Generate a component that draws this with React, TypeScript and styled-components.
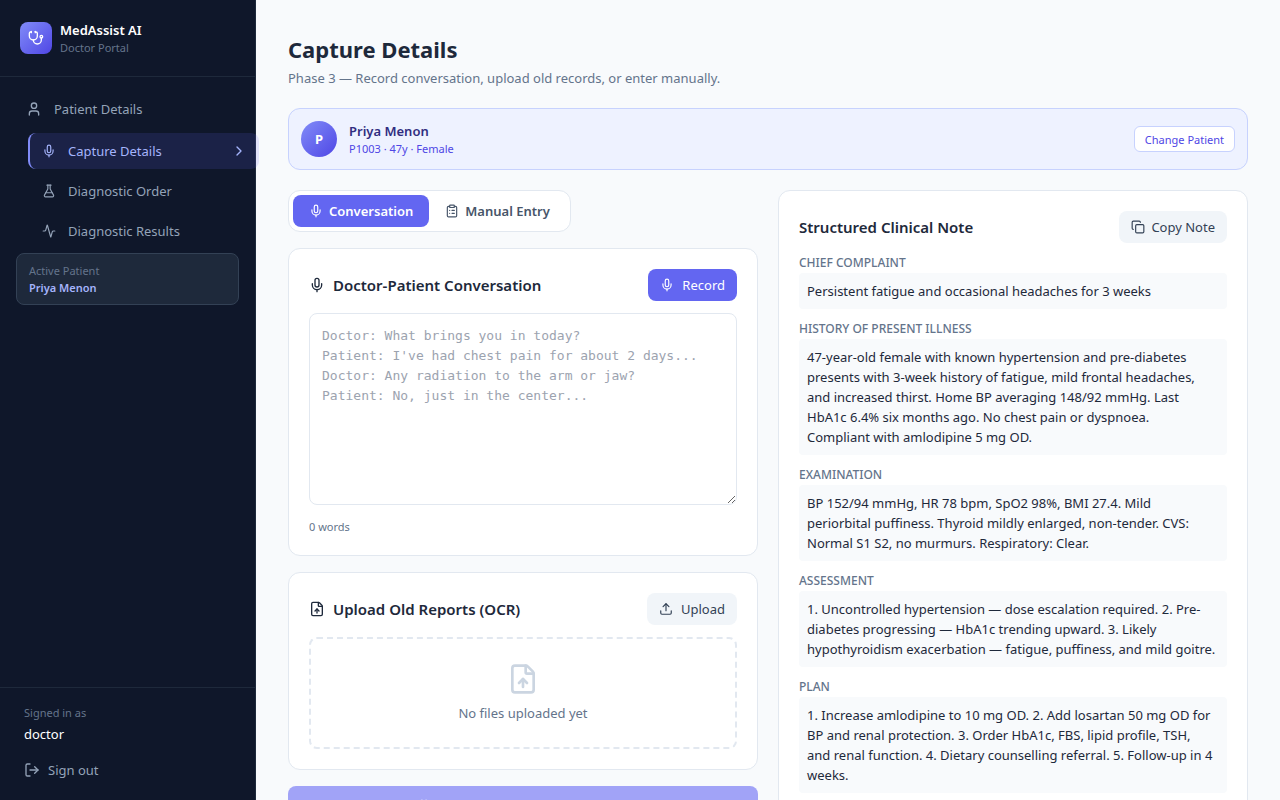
import React from 'react';
import styled, { createGlobalStyle, css } from 'styled-components';
import {
  Activity, Brain, ChevronRight, ClipboardList, Copy, FileUp, FlaskConical, LogOut, Mic, Stethoscope, Upload, User,
} from 'lucide-react';

const Global = createGlobalStyle`
  *, *::before, *::after { box-sizing: border-box; }
  body { margin: 0; background: #f8fafc; }
  body, button, textarea { font-family: "Segoe UI", "Noto Sans", "Open Sans", sans-serif; }
  h1, h2, h3, p, ul, dl, dd { margin: 0; padding: 0; }
  button { cursor: pointer; border: 0; }
`;

const Shell = styled.div`
  display: flex;
  height: 100vh;
  overflow: hidden;
  color: #1e293b;
  font-size: 13px;
  line-height: 20px;
`;

const Sidebar = styled.aside`
  position: relative;
  z-index: 1;
  display: flex;
  flex-direction: column;
  flex: 0 0 256px;
  background: #0f172a;
  border-right: 1px solid #1e293b;
`;

const Brand = styled.div`
  display: flex;
  align-items: center;
  gap: 8px;
  height: 77px;
  padding: 0 20px;
  border-bottom: 1px solid #1e293b;
`;

const Logo = styled.span`
  display: grid;
  place-items: center;
  width: 32px;
  height: 32px;
  border-radius: 8px;
  color: #fff;
  background: linear-gradient(135deg, #818cf8, #4f46e5);
`;

const BrandName = styled.p`
  color: #fff;
  font-weight: 600;
  line-height: 20px;
`;

const Small = styled.p<{ $color?: string }>`
  color: ${(p) => p.$color ?? '#64748b'};
  font-size: 11px;
  line-height: 16px;
`;

const Nav = styled.nav`
  padding: 14px 16px 0;
`;

const NavList = styled.ul<{ $nested?: boolean }>`
  display: flex;
  flex-direction: column;
  gap: 4px;
  list-style: none;
  ${(p) => p.$nested && css`margin: 6px -20px 0 12px;`}
`;

const NavLink = styled.a<{ $active?: boolean }>`
  display: flex;
  align-items: center;
  gap: 12px;
  height: 36px;
  padding: 0 12px 0 10px;
  border-radius: 8px;
  border-left: 0 solid #818cf8;
  color: #94a3b8;
  text-decoration: none;
  font-size: 13px;

  ${NavList} ${NavList} & {
    padding-left: 12px;
    border-left: 2px solid ${(p) => (p.$active ? '#818cf8' : 'transparent')};
  }
  ${(p) => p.$active && css`
    color: #a5b4fc;
    background: rgba(99, 102, 241, 0.15);
  `}
`;

const NavText = styled.span`
  flex: 1;
`;

const ActiveCard = styled.section`
  margin: 4px 16px 0;
  padding: 9px 12px 7px;
  border: 1px solid #334155;
  border-radius: 8px;
  background: #1e293b;
`;

const ActiveName = styled.p`
  color: #a5b4fc;
  font-size: 11px;
  font-weight: 600;
  line-height: 18px;
`;

const Account = styled.div`
  margin-top: auto;
  padding: 17px 24px 20px;
  border-top: 1px solid #1e293b;
`;

const UserName = styled.p`
  margin-top: 3px;
  color: #fff;
`;

const SignOut = styled.button`
  display: flex;
  align-items: center;
  gap: 8px;
  margin-top: 16px;
  padding: 0;
  color: #94a3b8;
  background: none;
  font-size: 13px;
  line-height: 20px;
`;

const Main = styled.main`
  flex: 1;
  min-width: 0;
  padding: 32px;
  overflow-y: auto;
  scrollbar-width: none;
`;

const Title = styled.h1`
  font-size: 22px;
  font-weight: 700;
  line-height: 34px;
`;

const Subtitle = styled.p`
  margin-top: 2px;
  color: #64748b;
`;

const Banner = styled.section`
  display: flex;
  align-items: center;
  gap: 12px;
  margin: 20px 0;
  padding: 12px;
  border: 1px solid #c7d2fe;
  border-radius: 12px;
  background: #eef2ff;
`;

const Avatar = styled.span`
  display: grid;
  place-items: center;
  width: 36px;
  height: 36px;
  border-radius: 50%;
  color: #fff;
  background: linear-gradient(135deg, #818cf8, #4f46e5);
  font-size: 13px;
  font-weight: 700;
`;

const BannerText = styled.div`
  flex: 1;
`;

const PatientName = styled.p`
  color: #312e81;
  font-weight: 600;
`;

const ChangeButton = styled.button`
  height: 26px;
  padding: 0 10px;
  border: 1px solid #c7d2fe;
  border-radius: 6px;
  color: #4f46e5;
  background: #fff;
  font-size: 11px;
`;

const Columns = styled.div`
  display: grid;
  grid-template-columns: 1fr 1fr;
  align-items: start;
  gap: 20px;
`;

const Stack = styled.div`
  display: flex;
  flex-direction: column;
  gap: 16px;
`;

const Tabs = styled.div`
  display: flex;
  align-self: flex-start;
  padding: 4px;
  border: 1px solid #e2e8f0;
  border-radius: 12px;
  background: #fff;
`;

const Tab = styled.button<{ $active?: boolean }>`
  display: flex;
  align-items: center;
  gap: 6px;
  height: 32px;
  padding: 0 16px;
  border-radius: 8px;
  color: ${(p) => (p.$active ? '#fff' : '#475569')};
  background: ${(p) => (p.$active ? '#6366f1' : 'transparent')};
  font-size: 13px;
  font-weight: 600;
`;

const Card = styled.section`
  padding: 20px;
  border: 1px solid #e2e8f0;
  border-radius: 12px;
  background: #fff;
`;

const CardHead = styled.div`
  display: flex;
  align-items: center;
  justify-content: space-between;
  margin-bottom: 12px;
`;

const CardTitle = styled.h2`
  display: flex;
  align-items: center;
  gap: 8px;
  font-size: 15px;
  font-weight: 600;
  line-height: 24px;
`;

const ActionButton = styled.button<{ $primary?: boolean; $gap?: number }>`
  display: flex;
  align-items: center;
  gap: ${(p) => p.$gap ?? 8}px;
  height: 32px;
  padding: 0 12px;
  border-radius: 8px;
  color: ${(p) => (p.$primary ? '#fff' : '#334155')};
  background: ${(p) => (p.$primary ? '#6366f1' : '#f1f5f9')};
  font-size: 13px;
`;

const Transcript = styled.textarea`
  display: block;
  width: 100%;
  height: 192px;
  padding: 12px;
  border: 1px solid #e2e8f0;
  border-radius: 8px;
  resize: vertical;
  background: #fff;
  color: #1e293b;
  font-family: Consolas, "DejaVu Sans Mono", monospace;
  font-size: 13px;
  line-height: 20px;

  &::placeholder { color: #9ca3af; }
`;

const WordCount = styled(Small)`
  margin-top: 14px;
`;

const DropZone = styled.div`
  display: flex;
  flex-direction: column;
  align-items: center;
  gap: 8px;
  padding: 24px;
  border: 2px dashed #e2e8f0;
  border-radius: 8px;
  color: #64748b;

  svg { color: #cbd5e1; }
`;

const Generate = styled.button`
  display: flex;
  align-items: center;
  justify-content: center;
  gap: 8px;
  height: 42px;
  border-radius: 8px;
  color: #fff;
  background: #a1a3f7;
  font-size: 13px;
  font-weight: 600;
`;

const Notes = styled.dl`
  display: flex;
  flex-direction: column;
  gap: 12px;
`;

const NoteLabel = styled.dt`
  margin-bottom: 2px;
  color: #64748b;
  font-size: 12px;
  font-weight: 500;
  line-height: 16px;
  text-transform: uppercase;
`;

const NoteBody = styled.dd`
  padding: 8px;
  border-radius: 4px;
  background: #f8fafc;
`;

const notes = [
  ['Chief Complaint', 'Persistent fatigue and occasional headaches for 3 weeks'],
  ['History of Present Illness', '47-year-old female with known hypertension and pre-diabetes presents with 3-week history of fatigue, mild frontal headaches, and increased thirst. Home BP averaging 148/92 mmHg. Last HbA1c 6.4% six months ago. No chest pain or dyspnoea. Compliant\u00a0with\u00a0amlodipine 5 mg OD.'],
  ['Examination', 'BP 152/94 mmHg, HR 78 bpm, SpO2 98%, BMI 27.4. Mild periorbital\u00a0puffiness. Thyroid mildly enlarged, non-tender. CVS: Normal S1 S2, no murmurs. Respiratory: Clear.'],
  ['Assessment', '1. Uncontrolled hypertension — dose escalation required. 2. Pre-diabetes progressing — HbA1c trending upward. 3. Likely hypothyroidism exacerbation — fatigue, puffiness, and mild goitre.'],
  ['Plan', '1. Increase amlodipine to 10 mg OD. 2. Add losartan 50 mg OD for BP and renal protection. 3. Order HbA1c, FBS, lipid profile, TSH, and\u00a0renal function. 4. Dietary counselling referral. 5. Follow-up in 4 weeks.'],
];

const placeholder = `Doctor: What brings you in today?
Patient: I've had chest pain for about 2 days...
Doctor: Any radiation to the arm or jaw?
Patient: No, just in the center...`;

export default function App() {
  return (
    <Shell>
      <Global />
      <Sidebar>
        <Brand>
          <Logo><Stethoscope size={16} /></Logo>
          <div>
            <BrandName>MedAssist AI</BrandName>
            <Small>Doctor Portal</Small>
          </div>
        </Brand>
        <Nav aria-label="Main">
          <NavList>
            <li>
              <NavLink href="#patient"><User size={16} /><NavText>Patient Details</NavText></NavLink>
              <NavList $nested>
                <li>
                  <NavLink href="#capture" $active aria-current="page">
                    <Mic size={14} /><NavText>Capture Details</NavText><ChevronRight size={16} />
                  </NavLink>
                </li>
                <li><NavLink href="#order"><FlaskConical size={14} /><NavText>Diagnostic Order</NavText></NavLink></li>
                <li><NavLink href="#results"><Activity size={14} /><NavText>Diagnostic Results</NavText></NavLink></li>
              </NavList>
            </li>
          </NavList>
        </Nav>
        <ActiveCard>
          <Small>Active Patient</Small>
          <ActiveName>Priya Menon</ActiveName>
        </ActiveCard>
        <Account>
          <Small>Signed in as</Small>
          <UserName>doctor</UserName>
          <SignOut type="button"><LogOut size={16} />Sign out</SignOut>
        </Account>
      </Sidebar>
      <Main>
        <Title>Capture Details</Title>
        <Subtitle>Phase 3 — Record conversation, upload old records, or enter manually.</Subtitle>
        <Banner>
          <Avatar>P</Avatar>
          <BannerText>
            <PatientName>Priya Menon</PatientName>
            <Small $color="#4f46e5">P1003 · 47y · Female</Small>
          </BannerText>
          <ChangeButton type="button">Change Patient</ChangeButton>
        </Banner>
        <Columns>
          <Stack>
            <Tabs role="tablist">
              <Tab type="button" role="tab" aria-selected $active><Mic size={14} />Conversation</Tab>
              <Tab type="button" role="tab" aria-selected={false}><ClipboardList size={14} />Manual Entry</Tab>
            </Tabs>
            <Card>
              <CardHead>
                <CardTitle id="conversation"><Mic size={16} />Doctor-Patient Conversation</CardTitle>
                <ActionButton type="button" $primary><Mic size={14} />Record</ActionButton>
              </CardHead>
              <Transcript aria-labelledby="conversation" placeholder={placeholder} />
              <WordCount>0 words</WordCount>
            </Card>
            <Card>
              <CardHead>
                <CardTitle><FileUp size={16} />Upload Old Reports (OCR)</CardTitle>
                <ActionButton type="button"><Upload size={14} />Upload</ActionButton>
              </CardHead>
              <DropZone>
                <FileUp size={32} />
                <p>No files uploaded yet</p>
              </DropZone>
            </Card>
            <Generate type="button" disabled><Brain size={16} />Generate Clinical Note with AI</Generate>
          </Stack>
          <Card>
            <CardHead>
              <CardTitle>Structured Clinical Note</CardTitle>
              <ActionButton type="button" $gap={6}><Copy size={14} />Copy Note</ActionButton>
            </CardHead>
            <Notes>
              {notes.map(([label, text]) => (
                <div key={label}>
                  <NoteLabel>{label}</NoteLabel>
                  <NoteBody>{text}</NoteBody>
                </div>
              ))}
            </Notes>
          </Card>
        </Columns>
      </Main>
    </Shell>
  );
}
